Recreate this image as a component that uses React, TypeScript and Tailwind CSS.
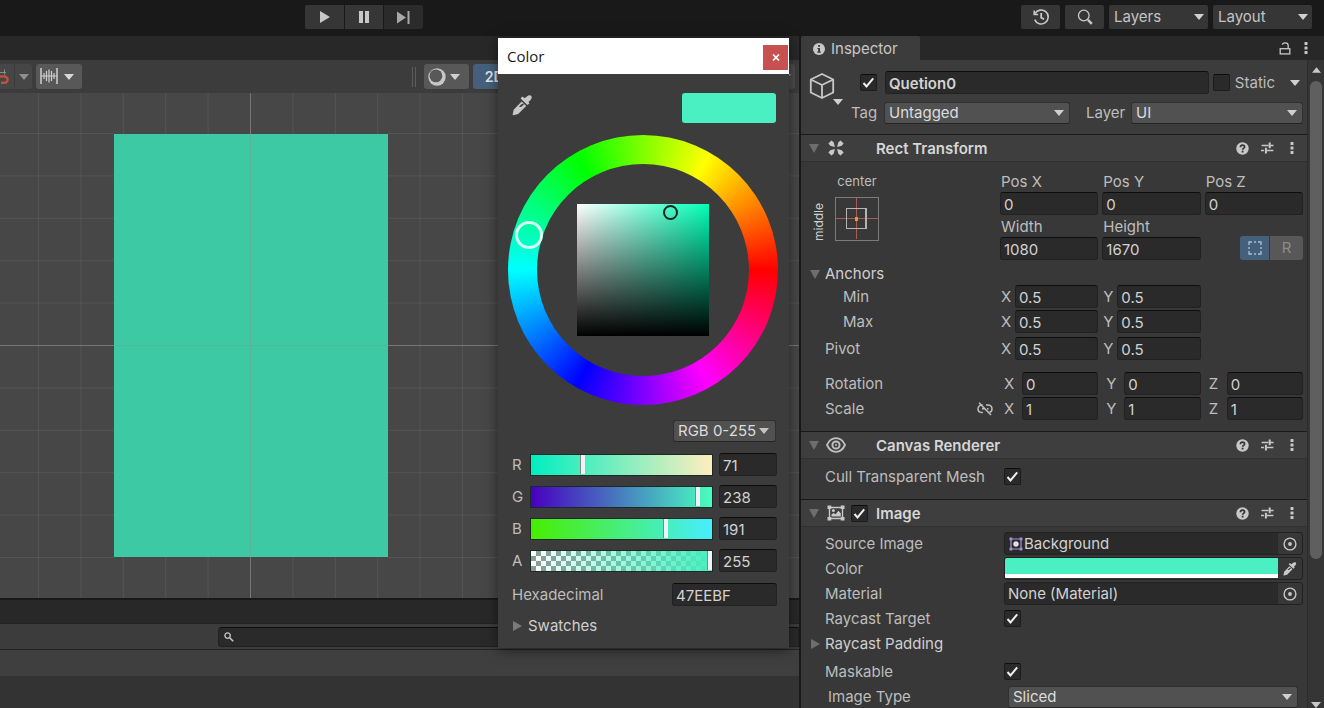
import { useId, type ReactNode } from "react";

const FIELD =
  "h-[23px] w-full min-w-0 rounded-[3px] border border-[#212121] border-t-[#0d0d0d] bg-[#2a2a2a] px-[3px] pt-px text-[#d2d2d2] outline-none";

/* ---------- small drawings ---------- */

function Down({ className = "" }: { className?: string }) {
  return (
    <svg viewBox="0 0 10 6" width="10" height="6" fill="currentColor" className={className} aria-hidden="true">
      <path d="M0 0h10L5 6z" />
    </svg>
  );
}

function Right({ className = "" }: { className?: string }) {
  return (
    <svg viewBox="0 0 9 10" width="9" height="10" fill="currentColor" className={className} aria-hidden="true">
      <path d="M0 0v10l9-5z" />
    </svg>
  );
}

function FoldDown() {
  return (
    <svg viewBox="0 0 10 9" width="10" height="9" fill="#6e6e6e" className="shrink-0" aria-hidden="true">
      <path d="M0 0h10L5 9z" />
    </svg>
  );
}

function Dots() {
  return (
    <svg viewBox="0 0 4 14" width="4" height="14" fill="#c8c8c8" aria-hidden="true">
      <rect x="0.5" y="1" width="3" height="3" rx="0.6" />
      <rect x="0.5" y="5.5" width="3" height="3" rx="0.6" />
      <rect x="0.5" y="10" width="3" height="3" rx="0.6" />
    </svg>
  );
}

function Dropper({ size }: { size: number }) {
  return (
    <svg viewBox="0 0 20 20" width={size} height={size} aria-hidden="true">
      <path
        d="M14.2 1.4c1.3-1.3 3-1.6 4-.7s.7 2.7-.5 4l-2 2 1 1.1-1.9 1.8-1.2-1.1-4.4-4.2-1-1.1L10 1.5l1.900 1.700z"
        fill="#c8c8c8"
      />
      <path d="M9.2 6.2 1.6 14 .6 18.9l.6.5 4.7-1.2 7.6-7.8z" fill="#c8c8c8" />
      <path d="M9.2 8.6 6.6 11.2l2.1.2 2.6-2.3-.3-.9z" fill="#3c3c3c" />
    </svg>
  );
}

function CubeIcon() {
  return (
    <svg viewBox="0 0 26 28" width="26" height="28" fill="none" stroke="#c8c8c8" strokeWidth="1.800" strokeLinejoin="round" aria-hidden="true">
      <path d="M13 2 24.2 7.5v13L13 26 1.8 20.500v-13z" />
      <path d="M1.8 7.5 13 13l11.2-5.500M13 13v13" />
    </svg>
  );
}

function InfoIcon() {
  return (
    <svg viewBox="0 0 12 12" width="12" height="12" aria-hidden="true">
      <circle cx="6" cy="6" r="6" fill="#c8c8c8" />
      <path d="M5.1 2.1h1.9v1.7H5.1zM4.4 4.900H7v3.600h.8v1.2H4.3V8.500h.8V6h-.7z" fill="#3c3c3c" />
    </svg>
  );
}

function UnlockIcon() {
  return (
    <svg viewBox="0 0 12 13" width="12" height="13" fill="none" stroke="#c8c8c8" strokeWidth="1.3" aria-hidden="true">
      <rect x="1.2" y="6.7" width="9.6" height="5.2" />
      <path d="M3.4 2.6c.2-1.2 1.2-1.800 2.800-1.800 1.900 0 3 .9 3 2.700v3.200" />
    </svg>
  );
}

function HelpIcon() {
  return (
    <svg viewBox="0 0 13 13" width="13" height="13" aria-hidden="true">
      <circle cx="6.5" cy="6.5" r="6.200" fill="#c8c8c8" />
      <path d="M4.400 5.200c0-1.300.8-2 2.100-2s2.100.7 2.100 1.800c0 1.300-2 1.400-2 2.700" fill="none" stroke="#333333" strokeWidth="1.700" />
      <rect x="5.700" y="8.700" width="1.800" height="1.800" fill="#333333" />
    </svg>
  );
}

function PresetIcon() {
  return (
    <svg viewBox="0 0 13 12" width="13" height="12" fill="none" stroke="#c8c8c8" aria-hidden="true">
      <path d="M.6 3.500h7M9 3.500h3.600M0 8.500h3M5.600 8.500h6.800" strokeWidth="1.500" />
      <path d="M8.700.4v5.800M4.900 5.800v5.800" strokeWidth="2" />
    </svg>
  );
}

function RectTransformIcon() {
  return (
    <svg viewBox="0 0 18 18" width="18" height="18" fill="#c8c8c8" aria-hidden="true">
      <path d="M1.400 4.400 4.400 1.400 6.700 3.200 7.900 7.900 3.200 6.700z" />
      <path d="M16.600 4.400 13.600 1.400 11.300 3.200 10.100 7.900 14.800 6.700z" />
      <path d="M1.400 13.600 4.400 16.600 6.700 14.800 7.900 10.100 3.200 11.300z" />
      <path d="M16.600 13.600 13.600 16.600 11.300 14.800 10.100 10.100 14.800 11.300z" />
    </svg>
  );
}

function EyeIcon() {
  return (
    <svg viewBox="0 0 20 16" width="20" height="16" fill="none" stroke="#c0c0c0" className="shrink-0" aria-hidden="true">
      <path d="M1 8c2-4.300 5.200-6.800 9-6.800s7 2.500 9 6.800c-2 4.300-5.200 6.800-9 6.800S3 12.300 1 8z" strokeWidth="1.800" />
      <circle cx="10" cy="8" r="3.600" strokeWidth="2" />
      <circle cx="10" cy="8" r="1" fill="#c0c0c0" stroke="none" />
    </svg>
  );
}

function ImageIcon() {
  return (
    <svg viewBox="0 0 18 16" width="18" height="16" aria-hidden="true">
      <path d="M2.500 2.500h13v11h-13z" fill="none" stroke="#c8c8c8" strokeWidth="1.400" />
      <path d="M0.500 0.500h3.800v3.600H.5zM13.700.5h3.800v3.600h-3.800zM.5 11.900h3.800v3.600H.5zM13.700 11.900h3.800v3.600h-3.800z" fill="#c8c8c8" />
      <path d="M4.500 11.600V9.400L6.400 8l2.200 1.200 2.800-3.400 2.400 2.400v3.400z" fill="#c8c8c8" />
      <circle cx="6.400" cy="5.600" r="1.500" fill="#c8c8c8" />
    </svg>
  );
}

function SpriteIcon() {
  return (
    <svg viewBox="0 0 14 14" width="14" height="14" aria-hidden="true">
      <path d="M2 2h10v10H2z" fill="none" stroke="#a493dc" strokeWidth="1.200" />
      <path d="M.6.6h2.600v2.600H.6zM10.800.6h2.600v2.600h-2.600zM.6 10.800h2.600v2.600H.6zM10.800 10.800h2.600v2.600h-2.600z" fill="#a493dc" />
      <circle cx="7" cy="7" r="2.700" fill="#e0e0e0" />
    </svg>
  );
}

function PickerIcon() {
  return (
    <svg viewBox="0 0 14 14" width="14" height="14" aria-hidden="true">
      <circle cx="7" cy="7" r="5.900" fill="none" stroke="#c8c8c8" strokeWidth="1.400" />
      <circle cx="7" cy="7" r="1.900" fill="#c8c8c8" />
    </svg>
  );
}

function UnlinkIcon() {
  return (
    <svg viewBox="0 0 16 14" width="16" height="14" fill="none" stroke="#c0c0c0" strokeWidth="1.500" aria-hidden="true">
      <path d="M5.600 3C2.900 2.800 1 4.500 1 6.800c0 2 1.300 3.600 3.600 3.600h1.200M9 2.900h1.600c2.600 0 4.400 1.700 4.400 4 0 1.700-1 3-2.500 3.400" />
      <path d="M5 6.700h2.400M10 6.700h1.500M2 .8l12 12.300" />
    </svg>
  );
}

function AnchorPreset() {
  return (
    <svg viewBox="0 0 44 44" width="44" height="44" fill="none" aria-hidden="true">
      <rect x="0.500" y="0.500" width="43" height="43" stroke="#7b7b7b" />
      <path d="M21.500 1v41M1 21.500h42" stroke="#a85a56" />
      <rect x="11.500" y="11.500" width="20" height="20" stroke="#b4b4b4" />
      <path d="M30.500 11v21" stroke="#b4b4b4" />
      <rect x="20" y="20" width="3" height="4" fill="#d9a02c" />
    </svg>
  );
}

/* ---------- shared controls ---------- */

function Check({ label, on = false }: { label: string; on?: boolean }) {
  return (
    <span className="relative inline-flex size-[17px] shrink-0">
      <input
        type="checkbox"
        aria-label={label}
        defaultChecked={on}
        className="peer size-full appearance-none rounded-[2px] border border-[#1c1c1c] border-t-[#0d0d0d] bg-[#2a2a2a]"
      />
      <svg
        viewBox="0 0 17 17"
        className="pointer-events-none absolute inset-0 hidden size-full peer-checked:block"
        fill="none"
        stroke="#f0f0f0"
        strokeWidth="2"
        aria-hidden="true"
      >
        <path d="m3.500 9 3 3.400 6.700-8" />
      </svg>
    </span>
  );
}

function Picker({
  label,
  value,
  id,
  tone = "panel",
}: {
  label: string;
  value: string;
  id?: string;
  tone?: "panel" | "bar";
}) {
  const style =
    tone === "bar"
      ? "h-6 rounded-[2px] bg-[#363636] pl-[5px] text-[#c4c4c4]"
      : "h-[22px] rounded-[3px] border border-[#303030] border-b-[#242424] bg-[#515151] pl-1 text-[#dcdcdc]";
  const arrow = tone === "bar" ? "right-1" : "right-[6px]";
  return (
    <span className="relative flex w-full items-center">
      <select id={id} aria-label={id ? undefined : label} defaultValue={value} className={`w-full appearance-none outline-none ${style}`}>
        <option>{value}</option>
      </select>
      <Down className={`pointer-events-none absolute text-[#d0d0d0] ${arrow}`} />
    </span>
  );
}

function Axis({ axis, name, value, wide = false }: { axis: string; name: string; value: string; wide?: boolean }) {
  const id = useId();
  return (
    <div className="flex items-center">
      <label htmlFor={id} className={wide ? "w-[22px] shrink-0 pl-1" : "w-[15px] shrink-0 pl-px"}>
        {axis}
      </label>
      <input id={id} aria-label={`${name} ${axis}`} defaultValue={value} className={FIELD} />
    </div>
  );
}

function Stacked({ label, value }: { label: string; value: string }) {
  const id = useId();
  return (
    <div className="flex flex-col">
      <label htmlFor={id} className="h-[22px] pl-px leading-6">
        {label}
      </label>
      <input id={id} defaultValue={value} className={FIELD} />
    </div>
  );
}

function AxisRow({ label, children, className = "" }: { label: ReactNode; children: ReactNode; className?: string }) {
  return (
    <div className={`grid h-[25px] grid-cols-[195px_1fr_1fr_1fr] items-center gap-1 pr-1 ${className}`}>
      {label}
      {children}
    </div>
  );
}

function PropRow({
  label,
  htmlFor,
  children,
  className = "",
}: {
  label: string;
  htmlFor?: string;
  children?: ReactNode;
  className?: string;
}) {
  return (
    <div className={`flex h-[25px] items-center pr-1 ${className}`}>
      <label htmlFor={htmlFor} className="w-[203px] shrink-0 pl-6">
        {label}
      </label>
      {children}
    </div>
  );
}

function ComponentHeader({ title, icon, toggle = false }: { title: string; icon: ReactNode; toggle?: boolean }) {
  return (
    <div className="flex h-[28px] shrink-0 items-center border-y border-t-[#1a1a1a] border-b-[#303030] bg-[#3e3e3e] pr-[13px] pl-2">
      <FoldDown />
      <span className="ml-2 flex w-[18px] shrink-0 justify-center">{icon}</span>
      <span className="flex w-[31px] shrink-0 pl-[6px]">{toggle && <Check label={`${title} enabled`} on />}</span>
      <h2 className="flex-1 pt-px font-semibold text-[#d6d6d6]">{title}</h2>
      <div className="flex items-center gap-3">
        <button aria-label={`${title} help`}>
          <HelpIcon />
        </button>
        <button aria-label={`${title} presets`}>
          <PresetIcon />
        </button>
        <button aria-label={`${title} options`} className="ml-1">
          <Dots />
        </button>
      </div>
    </div>
  );
}

function ObjectField({ id, value, icon }: { id: string; value: string; icon?: ReactNode }) {
  return (
    <div className="flex h-[23px] flex-1 items-center overflow-hidden rounded-[3px] border border-[#212121] bg-[#2a2a2a]">
      <span className={icon ? "pl-1" : "pl-[2px]"}>{icon}</span>
      <input id={id} readOnly defaultValue={value} className="min-w-0 flex-1 bg-transparent pt-px pl-px text-[#d2d2d2] outline-none" />
      <button aria-label={`Pick ${value}`} className="flex h-full w-6 items-center justify-center bg-[#373737]">
        <PickerIcon />
      </button>
    </div>
  );
}

/* ---------- top bar ---------- */

function TopBar() {
  return (
    <header className="flex h-9 shrink-0 items-start justify-between bg-[#191919] pt-[5px] pr-3 pl-[305px]">
      <div className="flex h-6 gap-px">
        <button aria-label="Play" className="flex w-[39px] items-center justify-center rounded-l-[2px] bg-[#363636]">
          <svg viewBox="0 0 10 12" width="10" height="12" fill="#c8c8c8">
            <path d="M0 0v12l10-6z" />
          </svg>
        </button>
        <button aria-label="Pause" className="flex w-[38px] items-center justify-center bg-[#363636]">
          <svg viewBox="0 0 10 12" width="10" height="12" fill="#c8c8c8">
            <path d="M0 0h4v12H0zM6 0h4v12H6z" />
          </svg>
        </button>
        <button aria-label="Step" className="flex w-[39px] items-center justify-center rounded-r-[2px] bg-[#2b2b2b]">
          <svg viewBox="0 0 13 13" width="13" height="13" fill="#a8a8a8">
            <path d="M0 .5v12l9-6zM10.500 0h2v13h-2z" />
          </svg>
        </button>
      </div>
      <div className="flex gap-[5px]">
        <button aria-label="Undo history" className="flex h-6 w-[39px] items-center justify-center rounded-[2px] bg-[#363636]">
          <svg viewBox="0 0 16 16" width="16" height="16" fill="none" stroke="#c8c8c8" strokeWidth="1.600">
            <path d="M2 4.700A7 7 0 1 1 1.700 10.600" />
            <path d="M1.200 1.600v3.900h4" />
            <path d="M8.200 4v4.800l2.800 1.300" strokeWidth="1.800" />
          </svg>
        </button>
        <button aria-label="Search" className="flex h-6 w-[39px] items-center justify-center rounded-[2px] bg-[#363636]">
          <svg viewBox="0 0 16 16" width="16" height="16" fill="none" stroke="#c8c8c8">
            <circle cx="6.800" cy="6.500" r="5.300" strokeWidth="1.300" />
            <path d="m11 10.800 3.800 4" strokeWidth="2.400" />
          </svg>
        </button>
        <div className="w-[99px]">
          <Picker tone="bar" label="Layers" value="Layers" />
        </div>
        <div className="w-[99px]">
          <Picker tone="bar" label="Layout" value="Layout" />
        </div>
      </div>
    </header>
  );
}

/* ---------- scene ---------- */

const GRID = [-5, -4, -3, -2, -1, 0, 1, 2, 3, 4, 5, 6, 7, 8, 9, 10, 11, 12];
const STEP = 42.4;

function Scene() {
  return (
    <div className="relative h-[505px] shrink-0 overflow-hidden bg-[#474747]">
      <svg width="100%" height="100%" className="block" aria-label="Scene canvas">
        <rect x="114" y="41" width="274" height="423" fill="#3dc9a3" />
        {GRID.map((i) => (
          <g key={i} stroke="#ffffff" strokeOpacity={i === 0 ? 0.26 : 0.07}>
            <line x1={250.5 + i * STEP} x2={250.5 + i * STEP} y1="0" y2="41" />
            <line x1={250.5 + i * STEP} x2={250.5 + i * STEP} y1="464" y2="100%" />
            {(i < -3 || i > 3) && <line x1={250.5 + i * STEP} x2={250.5 + i * STEP} y1="41" y2="464" />}
            {i === 0 && <line x1="250.500" x2="250.500" y1="41" y2="464" stroke="#7c9c90" strokeOpacity="0.450" />}
          </g>
        ))}
        {GRID.filter((i) => i < 6).map((i) => (
          <g key={i} stroke="#ffffff" strokeOpacity={i === 0 ? 0.26 : 0.07}>
            <line x1="0" x2="114" y1={252.5 + i * STEP} y2={252.5 + i * STEP} />
            <line x1="388" x2="100%" y1={252.5 + i * STEP} y2={252.5 + i * STEP} />
            {i === 0 && <line x1="114" x2="388" y1="252.500" y2="252.500" stroke="#7c9c90" strokeOpacity="0.450" />}
          </g>
        ))}
      </svg>
    </div>
  );
}

function SceneToolbar() {
  return (
    <div className="flex h-[33px] shrink-0 items-center overflow-hidden bg-[#3c3c3c] pr-1">
      <button aria-label="Snapping" className="flex h-[25px] w-[14px] items-center bg-[#464646]">
        <svg viewBox="0 0 10 20" width="10" height="20" fill="none">
          <path d="M0 5.500h6M4.500 2.500v5" stroke="#8a8a8a" />
          <path d="M0 9.500h4.500a3 3 0 0 1 0 6.200H1" stroke="#b9533e" strokeWidth="2.500" />
        </svg>
      </button>
      <button aria-label="Snapping options" className="ml-px flex h-[25px] w-[17px] items-center justify-center rounded-r-[3px] bg-[#464646]">
        <Down className="text-[#8f8f8f]" />
      </button>
      <button aria-label="Snap increment" className="ml-1 flex h-[25px] w-[46px] items-center gap-[6px] rounded-[3px] bg-[#585858] pl-1">
        <svg viewBox="0 0 18 16" width="18" height="16" fill="none" stroke="#d0d0d0" className="mb-[2px] shrink-0">
          <path d="M1 0v16M17 0v16" strokeWidth="1.500" />
          <path d="M1 8h16M4 5v6M6.500 3v10M9 1.500v13M11.500 3v10M14 5v6" strokeWidth="1.200" />
        </svg>
        <Down className="shrink-0 text-[#d8d8d8]" />
      </button>
      <span className="ml-[330px] h-5 w-1 shrink-0 border-x border-[#5c5c5c]" />
      <button aria-label="Draw mode" className="ml-2 flex h-[25px] w-[45px] shrink-0 items-center gap-1 rounded-[3px] bg-[#585858] pl-1">
        <svg viewBox="0 0 18 18" width="18" height="18" className="shrink-0">
          <circle cx="9" cy="9" r="8.700" fill="#c8c8c8" />
          <circle cx="7.900" cy="7.900" r="6.400" fill="#585858" />
        </svg>
        <Down className="shrink-0 text-[#d0d0d0]" />
      </button>
      <button className="ml-1 h-[25px] w-[46px] shrink-0 rounded-[3px] bg-[#46607c] pl-3 text-left font-['Roboto',sans-serif] font-medium text-[#e4e4e4]">2D</button>
      <button aria-label="Gizmos" className="ml-auto flex h-[25px] w-[46px] shrink-0 items-center justify-end rounded-[3px] bg-[#4c4c4c] pr-1">
        <Down className="text-[#b0b0b0]" />
      </button>
    </div>
  );
}

function LeftSide() {
  return (
    <main className="flex min-w-0 flex-1 flex-col bg-[#333333]">
      <div className="h-6 shrink-0 bg-[#282828]" />
      <SceneToolbar />
      <Scene />
      <div className="h-[26px] shrink-0 border-t-2 border-b border-t-[#191919] border-b-[#222222] bg-[#282828]" />
      <div className="flex h-[26px] shrink-0 items-center border-b border-[#242424] bg-[#3c3c3c] pl-[218px]">
        <label className="flex h-5 flex-1 items-center rounded-l-[4px] border border-[#212121] border-t-[#0d0d0d] bg-[#2a2a2a] pl-[5px]">
          <svg viewBox="0 0 10 10" width="10" height="10" fill="none" stroke="#c8c8c8">
            <circle cx="3.600" cy="3.600" r="2.700" strokeWidth="1.300" />
            <path d="m5.700 5.700 3.500 3.500" strokeWidth="1.600" />
          </svg>
          <input aria-label="Search project" className="h-full min-w-0 flex-1 bg-transparent px-1 text-[#d2d2d2] outline-none" />
        </label>
      </div>
      <div className="h-[26px] shrink-0 bg-[#3f3f3f]" />
    </main>
  );
}

/* ---------- colour window ---------- */

const CHANNELS = [
  { name: "R", value: 71, track: "bg-[linear-gradient(to_right,#00eebf,#47eebf_28%,#ffeebf)]" },
  { name: "G", value: 238, track: "bg-[linear-gradient(to_right,#4700bf,#47ffbf)]" },
  { name: "B", value: 191, track: "bg-[linear-gradient(to_right,#47ee00,#47eebf_75%,#47eeff)]" },
  {
    name: "A",
    value: 255,
    track:
      "bg-[linear-gradient(to_right,transparent,#47eebf),repeating-conic-gradient(#8c9a95_0_25%,#ffffff_0_50%)] bg-[length:100%_100%,10px_10px]",
  },
];

function ColorWindow() {
  return (
    <section
      aria-label="Color"
      className="absolute top-[38px] left-[498px] z-10 flex w-[291px] flex-col bg-[#3c3c3c] shadow-[0_2px_12px_rgba(0,0,0,0.5)]"
    >
      <div className="flex h-9 items-center justify-between bg-white pr-px pl-[9px]">
        <h1 className="font-['Open_Sans','Noto_Sans',sans-serif] text-[15px] text-[#1a1a1a]">Color</h1>
        <button aria-label="Close" className="mt-[2px] flex size-[25px] items-center justify-center bg-[#c75050]">
          <svg viewBox="0 0 8 7" width="8" height="7" stroke="#ffffff" strokeWidth="1.700">
            <path d="m1 .5 6 6M7 .5l-6 6" />
          </svg>
        </button>
      </div>

      <div className="flex flex-col pt-[19px] pr-3 pb-[10px] pl-[14px]">
        <div className="flex items-start justify-between pr-px">
          <button aria-label="Pick a color from the screen" className="pt-[2px]">
            <Dropper size={21} />
          </button>
          <span className="h-[30px] w-[94px] rounded-[3px] bg-[#4af0c1]" />
        </div>

        <div className="relative mt-3 -ml-1 flex size-[270px] items-center justify-center rounded-full bg-[conic-gradient(from_90deg,#f00,#f0f,#00f,#0ff,#0f0,#ff0,#f00)]">
          <div className="flex size-[212px] items-center justify-center rounded-full bg-[#3c3c3c]">
            <div className="relative size-[132px] bg-[linear-gradient(to_top,#000,transparent),linear-gradient(to_right,#fff,#00ffb7)]">
              <span className="absolute top-[1px] left-[86px] size-[15px] rounded-full border-2 border-[#10261e]" />
            </div>
          </div>
          <span className="absolute top-[86px] left-[7px] size-[28px] rounded-full border-[3px] border-[#d4fff2]" />
        </div>

        <div className="mt-[15px] mr-px w-[103px] self-end">
          <span className="relative flex items-center">
            <select
              aria-label="Color mode"
              className="h-[22px] w-full appearance-none rounded-[3px] border border-[#303030] border-b-[#242424] bg-[#515151] pl-1 text-[#dcdcdc] outline-none"
            >
              <option>RGB 0-255</option>
            </select>
            <Down className="pointer-events-none absolute right-[7px] text-[#c4c4c4]" />
          </span>
        </div>

        <div className="mt-[11px] flex flex-col gap-[9px]">
          {CHANNELS.map((c) => (
            <div key={c.name} className="flex h-[23px] items-center">
              <label htmlFor={`channel-${c.name}`} className="w-[18px] shrink-0">
                {c.name}
              </label>
              <input
                id={`channel-${c.name}`}
                type="range"
                min={0}
                max={255}
                defaultValue={c.value}
                className={`h-[22px] w-[183px] appearance-none border border-[#1c2a25] outline-none [&::-webkit-slider-thumb]:h-[19px] [&::-webkit-slider-thumb]:w-[5px] [&::-webkit-slider-thumb]:appearance-none [&::-webkit-slider-thumb]:border-l [&::-webkit-slider-thumb]:border-[#7a8a84] [&::-webkit-slider-thumb]:bg-[#f2f2f2] ${c.track}`}
              />
              <div className="ml-[6px] min-w-0 flex-1">
                <input aria-label={`${c.name} value`} defaultValue={c.value} className={FIELD} />
              </div>
            </div>
          ))}
        </div>

        <div className="mt-[11px] flex items-center justify-between">
          <label htmlFor="hex">Hexadecimal</label>
          <div className="w-[105px]">
            <input id="hex" defaultValue="47EEBF" className={FIELD} />
          </div>
        </div>

        <button className="mt-2 flex h-6 items-center gap-[6px] pl-px text-[#cfcfcf]">
          <Right className="text-[#7a7a7a]" />
          Swatches
        </button>
      </div>
    </section>
  );
}

/* ---------- inspector ---------- */

function ObjectHeader() {
  return (
    <div className="flex h-[74px] shrink-0 bg-[#3c3c3c] pt-[11px] pr-1 pl-2">
      <button aria-label="Object icon" className="flex h-[34px] w-[34px] items-end">
        <span className="self-start pt-px">
          <CubeIcon />
        </span>
        <Down className="-ml-[2px] shrink-0 text-[#d0d0d0]" />
      </button>
      <div className="ml-2 flex min-w-0 flex-1 flex-col gap-2">
        <div className="flex h-[23px] items-center">
          <div className="flex w-[34px] shrink-0 pl-[9px]">
            <Check label="Object active" on />
          </div>
          <input aria-label="Object name" defaultValue="Quetion0" className={`${FIELD} flex-1 font-semibold`} />
          <div className="ml-1 flex items-center gap-[5px]">
            <Check label="Static" />
            <span className="text-[#bdbdbd]">Static</span>
          </div>
          <button aria-label="Static options" className="flex w-7 shrink-0 justify-end pr-[3px]">
            <Down className="text-[#d0d0d0]" />
          </button>
        </div>
        <div className="flex h-[22px] items-center">
          <label htmlFor="tag" className="w-[33px] shrink-0">
            Tag
          </label>
          <div className="flex-1">
            <Picker id="tag" label="Tag" value="Untagged" />
          </div>
          <label htmlFor="layer" className="w-[61px] shrink-0 pl-4">
            Layer
          </label>
          <div className="w-[172px]">
            <Picker id="layer" label="Layer" value="UI" />
          </div>
        </div>
      </div>
    </div>
  );
}

function RectTransformBody() {
  return (
    <div className="flex flex-col pt-2 pb-[10px]">
      <div className="grid grid-cols-[195px_1fr_1fr_1fr] gap-x-1 pr-1">
        <div className="row-span-2 grid grid-cols-[24px_44px] content-start gap-x-[10px]">
          <span className="col-start-2 text-center text-[13px] leading-[22px]">center</span>
          <span className="mt-[5px] flex rotate-180 items-center text-[12px] leading-3 text-[#cfcfcf] [writing-mode:vertical-rl]">
            <span className="mr-auto">middle</span>
          </span>
          <button aria-label="Anchor presets" className="mt-[5px]">
            <AnchorPreset />
          </button>
        </div>
        <Stacked label="Pos X" value="0" />
        <Stacked label="Pos Y" value="0" />
        <Stacked label="Pos Z" value="0" />
        <Stacked label="Width" value="1080" />
        <Stacked label="Height" value="1670" />
        <div className="flex items-end justify-end gap-px">
          <button aria-label="Blueprint mode" className="flex h-6 w-[29px] items-center justify-center rounded-l-[3px] bg-[#46607c]">
            <svg viewBox="0 0 14 14" width="14" height="14" fill="none" stroke="#9fc0dc" strokeWidth="1.400">
              <path d="M1 4V1h3M10 1h3v3M13 10v3h-3M4 13H1v-3M6 1h2M6 13h2M1 6v2M13 6v2" />
            </svg>
          </button>
          <button aria-label="Raw edit mode" className="h-6 w-[33px] rounded-r-[3px] bg-[#585858] text-[#8c8c8c]">
            R
          </button>
        </div>
      </div>

      <button className="flex h-6 items-center gap-[5px] pt-1 pl-[9px] text-[#cfcfcf]">
        <FoldDown />
        Anchors
      </button>
      <AxisRow label={<span className="pl-[42px]">Min</span>}>
        <Axis axis="X" name="Anchor min" value="0.5" />
        <Axis axis="Y" name="Anchor min" value="0.5" />
      </AxisRow>
      <AxisRow label={<span className="pl-[42px]">Max</span>}>
        <Axis axis="X" name="Anchor max" value="0.5" />
        <Axis axis="Y" name="Anchor max" value="0.5" />
      </AxisRow>
      <AxisRow className="mt-[2px]" label={<span className="pl-6">Pivot</span>}>
        <Axis axis="X" name="Pivot" value="0.5" />
        <Axis axis="Y" name="Pivot" value="0.5" />
      </AxisRow>
      <AxisRow className="mt-[10px]" label={<span className="pl-6">Rotation</span>}>
        <Axis wide axis="X" name="Rotation" value="0" />
        <Axis wide axis="Y" name="Rotation" value="0" />
        <Axis wide axis="Z" name="Rotation" value="0" />
      </AxisRow>
      <AxisRow
        label={
          <span className="flex items-center justify-between pr-[3px] pl-6">
            Scale
            <button aria-label="Constrained proportions">
              <UnlinkIcon />
            </button>
          </span>
        }
      >
        <Axis wide axis="X" name="Scale" value="1" />
        <Axis wide axis="Y" name="Scale" value="1" />
        <Axis wide axis="Z" name="Scale" value="1" />
      </AxisRow>
    </div>
  );
}

function Inspector() {
  return (
    <aside className="flex w-[524px] shrink-0 flex-col border-l border-[#191919] bg-[#383838]">
      <div className="flex h-6 shrink-0 items-center justify-between bg-[#282828] pr-4">
        <div className="flex h-full w-[119px] items-center gap-[6px] rounded-t-[2px] bg-[#3c3c3c] pt-px pl-3 text-[#c8c8c8]">
          <InfoIcon />
          Inspector
        </div>
        <div className="flex items-center gap-[13px]">
          <button aria-label="Lock">
            <UnlockIcon />
          </button>
          <button aria-label="Inspector menu">
            <Dots />
          </button>
        </div>
      </div>

      <div className="flex min-h-0 flex-1">
        <div className="flex min-w-0 flex-1 flex-col overflow-hidden">
          <ObjectHeader />
          <ComponentHeader title="Rect Transform" icon={<RectTransformIcon />} />
          <RectTransformBody />
          <ComponentHeader title="Canvas Renderer" icon={<EyeIcon />} />
          <div className="pt-[5px] pb-[10px]">
            <PropRow label="Cull Transparent Mesh">
              <Check label="Cull Transparent Mesh" on />
            </PropRow>
          </div>
          <ComponentHeader title="Image" icon={<ImageIcon />} toggle />
          <div className="flex flex-col pt-1">
            <PropRow label="Source Image" htmlFor="source">
              <ObjectField id="source" value="Background" icon={<SpriteIcon />} />
            </PropRow>
            <PropRow label="Color" htmlFor="color">
              <div className="flex h-[23px] flex-1 overflow-hidden rounded-[3px] border border-[#212121] bg-[#373737]">
                <button id="color" aria-label="Color" className="h-5 flex-1 border-b-4 border-white bg-[#4af0c1]" />
                <button aria-label="Pick color" className="flex h-full w-6 items-center justify-center">
                  <Dropper size={14} />
                </button>
              </div>
            </PropRow>
            <PropRow label="Material" htmlFor="material">
              <ObjectField id="material" value="None (Material)" />
            </PropRow>
            <PropRow label="Raycast Target">
              <Check label="Raycast Target" on />
            </PropRow>
            <button className="flex h-[25px] items-center gap-[5px] pl-[10px] text-[#cfcfcf]">
              <Right className="text-[#6e6e6e]" />
              Raycast Padding
            </button>
            <PropRow label="Maskable" className="mt-[3px]">
              <Check label="Maskable" on />
            </PropRow>
            <div className="flex h-[25px] items-center pr-[9px]">
              <label htmlFor="image-type" className="w-[207px] shrink-0 pl-[27px]">
                Image Type
              </label>
              <Picker id="image-type" label="Image Type" value="Sliced" />
            </div>
          </div>
        </div>

        <div className="flex w-[17px] shrink-0 flex-col items-center border-l border-[#2c2c2c] bg-[#353535]">
          <svg viewBox="0 0 10 6" width="9" height="6" fill="#c8c8c8" className="mt-[7px] mb-2 shrink-0" aria-hidden="true">
            <path d="M0 6h10L5 0z" />
          </svg>
          <div className="w-3 flex-[479] rounded-full bg-[#5f5f5f]" />
          <div className="flex-[143]" />
          <Down className="shrink-0 text-[#c8c8c8]" />
        </div>
      </div>
    </aside>
  );
}

export default function App() {
  return (
    <div className="relative flex h-screen flex-col overflow-hidden bg-[#191919] font-['Inter','Liberation_Sans',sans-serif] text-[15px] leading-5 text-[#bdbdbd]">
      <TopBar />
      <div className="flex min-h-0 flex-1 gap-px">
        <LeftSide />
        <Inspector />
      </div>
      <ColorWindow />
    </div>
  );
}
